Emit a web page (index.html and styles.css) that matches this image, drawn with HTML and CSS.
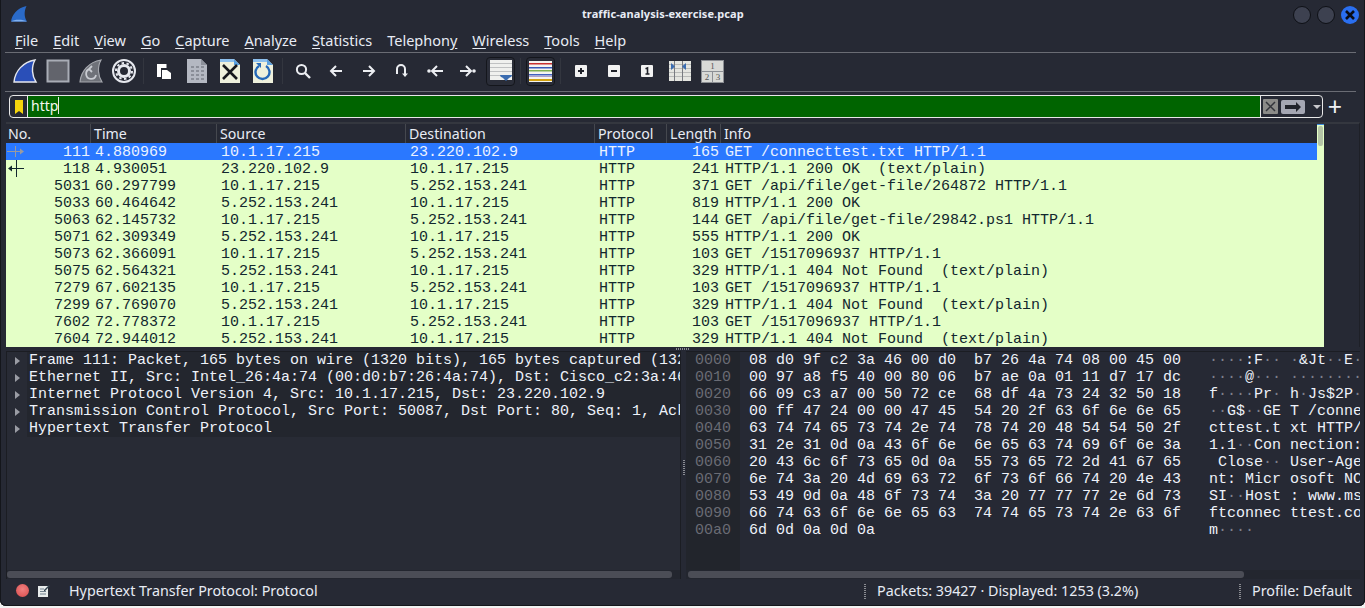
FILE: index.html
```html
<!DOCTYPE html>
<html lang="en">
<head>
<meta charset="utf-8">
<title>traffic-analysis-exercise.pcap</title>
<link rel="stylesheet" href="styles.css">
</head>
<body>
<div class="window">
  <header class="titlebar">
    <svg class="applogo" width="16" height="16" viewBox="0 0 16 16"><path d="M0 15.500C1 9 6 2 15.500 0 13 5 13 11 16 15.500Z" fill="#2a6ac8"/><path d="M0 15.500C3 13 12 13 16 15.500Z" fill="#7fb0f0"/></svg>
    <div class="wintitle">traffic-analysis-exercise.pcap</div>
    <div class="winbtns"><span class="wb"></span><span class="wb"></span><span class="wb close"><svg width="18" height="18" viewBox="0 0 18 18"><path d="M5 5l8 8M13 5l-8 8" stroke="#0b0d14" stroke-width="2.600"/></svg></span></div>
  </header>
  <nav class="menubar">
    <span><u>F</u>ile</span><span><u>E</u>dit</span><span><u>V</u>iew</span><span><u>G</u>o</span><span><u>C</u>apture</span><span><u>A</u>nalyze</span><span><u>S</u>tatistics</span><span>Telephon<u>y</u></span><span><u>W</u>ireless</span><span><u>T</u>ools</span><span><u>H</u>elp</span>
  </nav>
  <div class="toolbar">
    <span class="tb"><svg width="26" height="26" viewBox="0 0 26 26"><path d="M2 24C3 13 11 4 23 2 19 9 20 18 24 24Z" fill="#2a4fb8" stroke="#e6e8ee" stroke-width="1.400"/></svg></span>
    <span class="tb"><svg width="24" height="24" viewBox="0 0 24 24"><rect x="1.500" y="1.500" width="21" height="21" fill="#62646c" stroke="#a9adb6" stroke-width="2"/></svg></span>
    <span class="tb"><svg width="26" height="26" viewBox="0 0 26 26"><path d="M2 24C3 13 11 4 23 2 19 9 20 18 24 24Z" fill="#6f7279" stroke="#a5a8ae" stroke-width="1.200"/><path d="M18 17a5 5 0 1 1-6-6M14 8l-3 3 3 3" fill="none" stroke="#c9ccd2" stroke-width="1.800"/></svg></span>
    <span class="tb"><svg width="26" height="26" viewBox="0 0 26 26"><circle cx="13" cy="13" r="11" fill="none" stroke="#e6e8ee" stroke-width="2"/><circle cx="13" cy="13" r="5.500" fill="none" stroke="#e6e8ee" stroke-width="3"/><circle cx="13" cy="13" r="8" fill="none" stroke="#e6e8ee" stroke-width="2" stroke-dasharray="2.500 2.500"/></svg></span>
    <span class="sep"></span>
    <span class="tb"><svg width="16" height="17" viewBox="0 0 16 17"><path d="M1 1h10v4H5v9H1Z" fill="#fff"/><path d="M6 7h5l4 3v6H6Z" fill="#fff"/><path d="M11 1v4" stroke="#262934"/></svg></span>
    <span class="tb"><svg width="20" height="24" viewBox="0 0 20 24"><path d="M0 0h14l6 6v18H0Z" fill="#b4b8c2"/><path d="M14 0v6h6" fill="#8d919b"/><path d="M4 8h3M9 8h3M14 8h3M4 12h3M9 12h3M14 12h3M4 16h3M9 16h3M14 16h3M4 20h3M9 20h3M14 20h3" stroke="#8a8e98" stroke-width="2"/></svg></span>
    <span class="tb"><svg width="20" height="24" viewBox="0 0 20 24"><path d="M0 0h14l6 6v18H0Z" fill="#eef0dc"/><path d="M14 0v6h6Z" fill="#5aa0e0"/><path d="M0 0h14v3H0Z" fill="#8dc0ee"/><path d="M3 6l14 14M17 6L3 20" stroke="#15171d" stroke-width="2.600"/></svg></span>
    <span class="tb"><svg width="20" height="24" viewBox="0 0 20 24"><path d="M0 0h14l6 6v18H0Z" fill="#eef0dc"/><path d="M14 0v6h6Z" fill="#5aa0e0"/><path d="M0 0h14v3H0Z" fill="#8dc0ee"/><path d="M6 7a7 7 0 1 0 7 0" fill="none" stroke="#2468b8" stroke-width="2.400"/><path d="M3 4l5 0 0 5Z" fill="#2468b8"/></svg></span>
    <span class="sep"></span>
    <span class="tb"><svg width="16" height="16" viewBox="0 0 16 16"><circle cx="6.500" cy="6.500" r="4.600" fill="none" stroke="#eceef2" stroke-width="2"/><path d="M10 10l5 5" stroke="#eceef2" stroke-width="2.400"/></svg></span>
    <span class="tb"><svg width="14" height="14" viewBox="0 0 14 14"><path d="M13 7H2M7 2L2 7l5 5" fill="none" stroke="#eceef2" stroke-width="2"/></svg></span>
    <span class="tb"><svg width="14" height="14" viewBox="0 0 14 14"><path d="M1 7h11M7 2l5 5-5 5" fill="none" stroke="#eceef2" stroke-width="2"/></svg></span>
    <span class="tb"><svg width="14" height="14" viewBox="0 0 14 14"><path d="M2 10V5a4 4 0 0 1 8 0v6" fill="none" stroke="#eceef2" stroke-width="2"/><path d="M7 9.500h6L10 13Z" fill="#eceef2"/></svg></span>
    <span class="tb"><svg width="16" height="14" viewBox="0 0 16 14"><circle cx="2" cy="7" r="1.800" fill="#eceef2"/><path d="M16 7H6M10 2L5 7l5 5" fill="none" stroke="#eceef2" stroke-width="2"/></svg></span>
    <span class="tb"><svg width="16" height="14" viewBox="0 0 16 14"><circle cx="14" cy="7" r="1.800" fill="#eceef2"/><path d="M0 7h10M6 2l5 5-5 5" fill="none" stroke="#eceef2" stroke-width="2"/></svg></span>
    <span class="tb on"><svg width="22" height="22" viewBox="0 0 22 22"><rect width="22" height="20" fill="#eff0ee"/><path d="M0 3.500h22M0 7.500h22M0 11.500h22M0 15.500h22" stroke="#bfc1c2"/><path d="M10 15h12c0 2-2 2.500-3 3L16 21l-3-3c-1-.5-3-1-3-3Z" fill="#3a6cb0"/></svg></span>
    <span class="sep"></span>
    <span class="tb on"><svg width="23" height="21" viewBox="0 0 23 21"><rect width="23" height="21" fill="#f4f4f0"/><rect y="2" width="23" height="1.500" fill="#c83030"/><rect y="6" width="23" height="1.500" fill="#3858b8"/><rect y="9" width="23" height="1.500" fill="#7fb050"/><rect y="13" width="23" height="1.500" fill="#4060c0"/><rect y="15" width="23" height="1" fill="#b0a0c8"/><rect y="18" width="23" height="2" fill="#d0a010"/></svg></span>
    <span class="sep"></span>
    <span class="tb"><svg width="12" height="12" viewBox="0 0 12 12"><rect width="12" height="12" rx="1" fill="#f2f2f2"/><path d="M3 6h6M6 3v6" stroke="#20222a" stroke-width="2"/></svg></span>
    <span class="tb"><svg width="12" height="12" viewBox="0 0 12 12"><rect width="12" height="12" rx="1" fill="#f2f2f2"/><path d="M3 6h6" stroke="#20222a" stroke-width="2"/></svg></span>
    <span class="tb"><svg width="12" height="12" viewBox="0 0 12 12"><rect width="12" height="12" rx="1" fill="#f2f2f2"/><path d="M4.500 3.800 6.500 3v6M4.500 9h4" fill="none" stroke="#20222a" stroke-width="1.600"/></svg></span>
    <span class="tb"><svg width="22" height="20" viewBox="0 0 22 20"><rect width="22" height="20" fill="#e4e5e0"/><path d="M0 3.500h22M0 7.500h22M0 11.500h22M0 15.500h22" stroke="#b8bab8"/><path d="M5.500 0v20M13.500 0v20" stroke="#777a80"/><path d="M2 2v7l4-3.500ZM17 2v7l-4-3.500Z" fill="#3a6cb0"/></svg></span>
    <span class="tb"><svg width="23" height="23" viewBox="0 0 23 23"><rect x=".5" y=".5" width="22" height="22" fill="#d8d9d6" stroke="#8c8f94"/><path d="M.5 11.500h22M11.500 11.500v11" stroke="#8c8f94"/><text x="11.500" y="8.500" class="ltxt">1</text><text x="6" y="20" class="ltxt">2</text><text x="17" y="20" class="ltxt">3</text></svg></span>
  </div>
  <div class="filterbar">
    <div class="filterbox">
      <span class="bookmark"><svg width="8" height="14" viewBox="0 0 8 14"><path d="M0 0h8v14L4 11 0 14Z" fill="#f4d40c"/></svg></span>
      <span class="filtertext">http</span>
      <span class="fx"><svg width="15" height="15" viewBox="0 0 15 15"><rect width="15" height="15" rx="1" fill="#8b8b88"/><path d="M3 3l9 9M12 3l-9 9" stroke="#33353b" stroke-width="1.500"/></svg></span>
      <span class="fgo"><svg width="24" height="14" viewBox="0 0 24 14"><rect width="24" height="14" rx="2" fill="#a5a7b3"/><path d="M4 5h11V2l5 5-5 5V9H4Z" fill="#21232b"/></svg></span>
      <span class="fdrop"></span>
    </div>
    <span class="plus">+</span>
  </div>
  <section class="listpane">
    <div class="list">
      <div class="row head"><span class="c1">No.</span><span class="c2">Time</span><span class="c3">Source</span><span class="c4">Destination</span><span class="c5">Protocol</span><span class="c6">Length</span><span class="c7">Info</span></div>
      <div class="row sel"><svg class="rel" width="18" height="17" viewBox="0 0 18 17"><path d="M0 8.500h15M8.500 3v11" stroke="#9a9aa0"/><path d="M13 5.500l4 3-4 3Z" fill="#9a9aa0"/></svg><span class="c1">111</span><span class="c2">4.880969</span><span class="c3">10.1.17.215</span><span class="c4">23.220.102.9</span><span class="c5">HTTP</span><span class="c6">165</span><span class="c7">GET /connecttest.txt HTTP/1.1</span></div>
      <div class="row"><svg class="rel" width="18" height="17" viewBox="0 0 18 17"><path d="M3 8.500h14M9.500 0v17" stroke="#12272e"/><path d="M5 5.500l-4 3 4 3Z" fill="#12272e"/></svg><span class="c1">118</span><span class="c2">4.930051</span><span class="c3">23.220.102.9</span><span class="c4">10.1.17.215</span><span class="c5">HTTP</span><span class="c6">241</span><span class="c7">HTTP/1.1 200 OK  (text/plain)</span></div>
      <div class="row"><span class="c1">5031</span><span class="c2">60.297799</span><span class="c3">10.1.17.215</span><span class="c4">5.252.153.241</span><span class="c5">HTTP</span><span class="c6">371</span><span class="c7">GET /api/file/get-file/264872 HTTP/1.1</span></div>
      <div class="row"><span class="c1">5033</span><span class="c2">60.464642</span><span class="c3">5.252.153.241</span><span class="c4">10.1.17.215</span><span class="c5">HTTP</span><span class="c6">819</span><span class="c7">HTTP/1.1 200 OK</span></div>
      <div class="row"><span class="c1">5063</span><span class="c2">62.145732</span><span class="c3">10.1.17.215</span><span class="c4">5.252.153.241</span><span class="c5">HTTP</span><span class="c6">144</span><span class="c7">GET /api/file/get-file/29842.ps1 HTTP/1.1</span></div>
      <div class="row"><span class="c1">5071</span><span class="c2">62.309349</span><span class="c3">5.252.153.241</span><span class="c4">10.1.17.215</span><span class="c5">HTTP</span><span class="c6">555</span><span class="c7">HTTP/1.1 200 OK</span></div>
      <div class="row"><span class="c1">5073</span><span class="c2">62.366091</span><span class="c3">10.1.17.215</span><span class="c4">5.252.153.241</span><span class="c5">HTTP</span><span class="c6">103</span><span class="c7">GET /1517096937 HTTP/1.1</span></div>
      <div class="row"><span class="c1">5075</span><span class="c2">62.564321</span><span class="c3">5.252.153.241</span><span class="c4">10.1.17.215</span><span class="c5">HTTP</span><span class="c6">329</span><span class="c7">HTTP/1.1 404 Not Found  (text/plain)</span></div>
      <div class="row"><span class="c1">7279</span><span class="c2">67.602135</span><span class="c3">10.1.17.215</span><span class="c4">5.252.153.241</span><span class="c5">HTTP</span><span class="c6">103</span><span class="c7">GET /1517096937 HTTP/1.1</span></div>
      <div class="row"><span class="c1">7299</span><span class="c2">67.769070</span><span class="c3">5.252.153.241</span><span class="c4">10.1.17.215</span><span class="c5">HTTP</span><span class="c6">329</span><span class="c7">HTTP/1.1 404 Not Found  (text/plain)</span></div>
      <div class="row"><span class="c1">7602</span><span class="c2">72.778372</span><span class="c3">10.1.17.215</span><span class="c4">5.252.153.241</span><span class="c5">HTTP</span><span class="c6">103</span><span class="c7">GET /1517096937 HTTP/1.1</span></div>
      <div class="row"><span class="c1">7604</span><span class="c2">72.944012</span><span class="c3">5.252.153.241</span><span class="c4">10.1.17.215</span><span class="c5">HTTP</span><span class="c6">329</span><span class="c7">HTTP/1.1 404 Not Found  (text/plain)</span></div>
    </div>
    <div class="vscroll"><span class="vthumb"></span></div>
  </section>
  <div class="hsplit"><span class="grip"></span></div>
  <section class="bottom">
    <div class="details">
      <div class="tree">
        <div class="node">Frame 111: Packet, 165 bytes on wire (1320 bits), 165 bytes captured (1320 bits) on interface</div>
        <div class="node">Ethernet II, Src: Intel_26:4a:74 (00:d0:b7:26:4a:74), Dst: Cisco_c2:3a:46 (08:d0:9f:c2:3a:46)</div>
        <div class="node">Internet Protocol Version 4, Src: 10.1.17.215, Dst: 23.220.102.9</div>
        <div class="node">Transmission Control Protocol, Src Port: 50087, Dst Port: 80, Seq: 1, Ack: 1, Len: 111</div>
        <div class="node">Hypertext Transfer Protocol</div>
      </div>
      <div class="hbar"><span class="hthumb left"></span></div>
    </div>
    <div class="vsplit"><span class="vgrip"></span></div>
    <div class="hexpane">
      <div class="hexbody">
        <div class="offsets">0000
0010
0020
0030
0040
0050
0060
0070
0080
0090
00a0</div>
        <div class="hex">08 d0 9f c2 3a 46 00 d0  b7 26 4a 74 08 00 45 00
00 97 a8 f5 40 00 80 06  b7 ae 0a 01 11 d7 17 dc
66 09 c3 a7 00 50 72 ce  68 df 4a 73 24 32 50 18
00 ff 47 24 00 00 47 45  54 20 2f 63 6f 6e 6e 65
63 74 74 65 73 74 2e 74  78 74 20 48 54 54 50 2f
31 2e 31 0d 0a 43 6f 6e  6e 65 63 74 69 6f 6e 3a
20 43 6c 6f 73 65 0d 0a  55 73 65 72 2d 41 67 65
6e 74 3a 20 4d 69 63 72  6f 73 6f 66 74 20 4e 43
53 49 0d 0a 48 6f 73 74  3a 20 77 77 77 2e 6d 73
66 74 63 6f 6e 6e 65 63  74 74 65 73 74 2e 63 6f
6d 0d 0a 0d 0a</div>
        <div class="ascii"><i>····</i>:F<i>··</i> <i>·</i>&amp;Jt<i>··</i>E<i>·</i>
<i>····</i>@<i>···</i> <i>········</i>
f<i>····</i>Pr<i>·</i> h<i>·</i>Js$2P<i>·</i>
<i>··</i>G$<i>··</i>GE T /conne
cttest.t xt HTTP/
1.1<i>··</i>Con nection:
 Close<i>··</i> User-Age
nt: Micr osoft NC
SI<i>··</i>Host : www.ms
ftconnec ttest.co
m<i>····</i></div>
      </div>
      <div class="hbar"><span class="hthumb right"></span></div>
    </div>
  </section>
  <footer class="status">
    <span class="led"></span>
    <svg class="note" width="12" height="13" viewBox="0 0 12 13"><rect y="2" width="10" height="11" fill="#e8ecec"/><path d="M2 5h4M2 7.500h6M2 10h6" stroke="#70808c"/><path d="M6 6l5-5 1 1-5 5H6Z" fill="#30404c"/></svg>
    <span class="smsg">Hypertext Transfer Protocol: Protocol</span>
    <span class="sgrip"></span>
    <span class="spk">Packets: 39427 · Displayed: 1253 (3.2%)</span>
    <span class="sgrip"></span>
    <span class="spr">Profile: Default</span>
  </footer>
</div>
</body>
</html>
```
FILE: styles.css
```css
* { box-sizing: border-box; }
html, body { margin: 0; height: 608px; overflow: hidden; background: #f2f2f2; }
body { font-family: "Noto Sans", sans-serif; color: #e8ecf4; }
.window { width: 1365px; height: 606px; background: #262934; border-radius: 0 0 6px 6px; box-shadow: inset 1px 0 0 #14161b, inset -1px 0 0 #14161b, inset 0 -1px 0 #14161b; display: flex; flex-direction: column; overflow: hidden; }

.titlebar { height: 30px; flex: none; display: flex; align-items: center; position: relative; padding-left: 11px; }
.applogo { flex: none; margin-top: -2px; }
.wintitle { position: absolute; left: 582px; top: 6px; font-size: 11px; font-weight: 700; line-height: 16px; letter-spacing: .1px; white-space: nowrap; }
.winbtns { margin-left: auto; display: flex; gap: 6px; padding-right: 6px; margin-top: -1px; }
.wb { width: 18px; height: 18px; border-radius: 50%; background: #3d4150; border: 1px solid #0e1016; display: block; }
.wb.close { background: #2a6ff0; border: 0; }
.wb.close svg { display: block; }

.menubar { height: 23px; flex: none; margin: 0 9px 0 5px; padding-left: 10px; display: flex; gap: 15px; font-size: 14.5px; line-height: 20px; border-bottom: 1px solid #6a6c74; white-space: nowrap; }
.menubar u { text-underline-offset: 2px; }

.toolbar { height: 39px; flex: none; margin: 0 9px 0 5px; padding: 0 0 2px 3px; display: flex; align-items: center; border-bottom: 1px solid #6a6c74; }
.tb { width: 33px; height: 33px; flex: none; display: flex; align-items: center; justify-content: center; }
.tb.on { width: 29px; height: 29px; margin: 0 2px; border: 1px solid #14161c; border-radius: 4px; background: #2a2d38; }
.sep { width: 7px; height: 26px; flex: none; position: relative; }
.sep::after { content: ""; position: absolute; left: 3px; top: 0; bottom: 0; width: 1px; background: #33363f; }
.ltxt { font-family: "Liberation Serif", serif; font-size: 9px; fill: #555; text-anchor: middle; }

.filterbar { height: 30px; flex: none; padding: 3px 0 0 9px; display: flex; align-items: flex-start; }
.filterbox { width: 1314px; height: 23px; border: 1px solid #e8e8e8; border-radius: 4px; display: flex; align-items: center; }
.bookmark { width: 18px; height: 21px; flex: none; display: flex; align-items: center; justify-content: center; border-right: 1px solid #e8e8e8; }
.filtertext { width: 1233px; height: 21px; flex: none; background: #006400; color: #f4f8f0; font-size: 14px; line-height: 20px; padding-left: 3px; border-right: 1px solid #e8e8e8; }
.filtertext::after { content: ""; display: inline-block; width: 1px; height: 17px; background: #e8e8e8; vertical-align: -3px; }
.fx { margin-left: 2px; height: 15px; display: flex; flex: none; }
.fgo { margin-left: 3px; height: 14px; display: flex; flex: none; }
.fdrop { margin-left: 8px; width: 0; height: 0; border: 4px solid transparent; border-top: 4px solid #c8c8cc; border-bottom: 0; flex: none; }
.plus { width: 26px; text-align: center; font-size: 25px; line-height: 22px; color: #eef0f4; margin-left: -1px; }

.listpane { height: 225px; flex: none; margin: 0 5px 0 6px; display: flex; border-top: 2px solid #34373f; border-right: 1px solid #1e2027; background: #262934; }
.list { width: 1311px; flex: none; overflow: hidden; }
.vscroll { width: 7px; height: 223px; flex: none; background: #e4ffc7; padding: 1px; border-top: 1px solid #3d8be0; }
.vthumb { display: block; height: 20px; background: #b4c4a6; border-radius: 2px; width: 5px; }

.row { height: 17px; display: flex; background: #e4ffc7; color: #12272e; font: 15px/19px "Liberation Mono", monospace; white-space: pre; position: relative; }
.row.sel { background: #2a78ff; color: #eaf2ff; }
.row span { display: block; overflow: hidden; flex: none; padding-left: 4px; height: 19px; }
.c1 { width: 85px; text-align: right; }
.c2 { width: 126px; }
.c3 { width: 189px; }
.c4 { width: 189px; }
.c5 { width: 72px; }
.c6 { width: 54px; text-align: right; }
.c7 { width: 596px; }
.row .c1 { padding-left: 0; padding-right: 1px; }
.row .c6 { padding-left: 0; padding-right: 2px; }
.rel { position: absolute; left: 1px; top: 0; }
.row.head { height: 19px; background: #262934; color: #e8ecf4; font: 14.2px/19px "Noto Sans", sans-serif; }
.row.head span { border-right: 1px solid #45484f; padding-left: 3px; }
.row.head .c1 { text-align: left; padding: 0 0 0 2px; }
.row.head .c6 { text-align: left; padding: 0 0 0 3px; }
.row.head .c7 { border: 0; }

.hsplit { height: 4px; flex: none; display: flex; justify-content: center; position: relative; }
.grip { position: absolute; left: 676px; top: 1px; width: 14px; height: 2px; background: repeating-linear-gradient(90deg, #8a8c92 0 1px, transparent 1px 2px); }

.bottom { flex: 1; min-height: 0; display: flex; margin: 0 5px 0 6px; }
.details { width: 675px; flex: none; display: flex; flex-direction: column; background: #282b35; border: 1px solid #1b1d23; border-width: 1px 1px 0 1px; }
.tree { flex: 1; font: 15px/17px "Liberation Mono", monospace; overflow: hidden; min-height: 0; }
.node { height: 17px; padding-left: 22px; background: linear-gradient(90deg, #282b35 20px, #23262e 20px); position: relative; color: #eef2fa; white-space: pre; }
.node::before { content: ""; position: absolute; left: 8px; top: 5px; border: 4px solid transparent; border-left: 5px solid #9a9ca4; border-right: 0; }
.vsplit { width: 5px; flex: none; position: relative; }
.vgrip { position: absolute; left: 2px; top: 108px; width: 2px; height: 16px; background: repeating-linear-gradient(0deg, #8a8c92 0 1px, transparent 1px 2px); }
.hexpane { flex: 1; min-width: 0; display: flex; flex-direction: column; background: #262934; border-top: 1px solid #1b1d23; }
.hexbody { flex: 1; display: flex; font: 15px/17px "Liberation Mono", monospace; white-space: pre; min-height: 0; overflow: hidden; color: #eef2fa; }
.offsets { width: 54px; flex: none; padding-left: 9px; color: #6a6c74; background: #22252c; }
.hex { width: 469px; flex: none; padding-left: 9px; }
.ascii { flex: 1; min-width: 0; overflow: hidden; }
.ascii i { font-style: normal; color: #7d808a; }
.hbar { height: 9px; flex: none; padding: 1px 0 0 2px; background: #23262f; }
.hthumb { display: block; height: 7px; background: #4b4d56; border-radius: 3px; }
.hthumb.left { width: 665px; margin-left: -2px; }
.hthumb.right { width: 556px; }

.status { height: 27px; flex: none; display: flex; align-items: center; font-size: 14.3px; padding: 0 0 4px 16px; white-space: nowrap; }
.led { width: 13px; height: 13px; border-radius: 50%; background: radial-gradient(circle at 50% 40%, #f08080, #d84a4a); flex: none; }
.note { margin-left: 9px; flex: none; }
.smsg { margin-left: 19px; width: 795px; flex: none; }
.sgrip { width: 2px; height: 16px; flex: none; background: repeating-linear-gradient(0deg, #8a8c92 0 1px, transparent 1px 2px); }
.spk { margin-left: 11px; width: 362px; flex: none; }
.spr { margin-left: 11px; }
```
